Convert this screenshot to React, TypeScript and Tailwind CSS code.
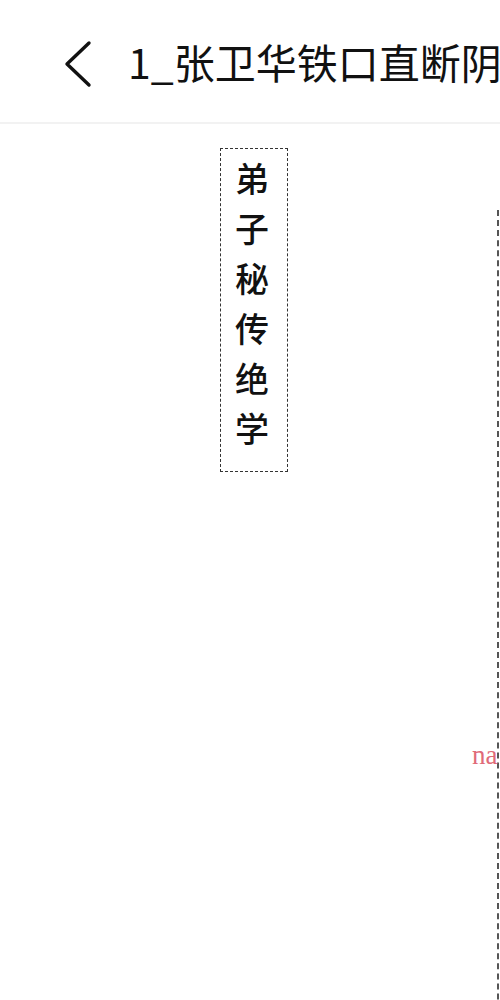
const SPINE = ['弟', '子', '秘', '传', '绝', '学']

export default function App() {
	return (
		<div className="relative h-[1000px] w-[500px] overflow-hidden bg-white [font-family:'Noto_Sans_CJK_SC',sans-serif]">
			{/* Header */}
			<div className="flex h-[124px] items-center border-b-2 border-[#f2f2f2] pl-[62px]">
				<svg width="30" height="48" viewBox="0 0 30 48" fill="none" className="mt-[6px] shrink-0">
					<path d="M27 3 L5 24 L27 45" stroke="#111" strokeWidth="3.4" strokeLinecap="round" strokeLinejoin="round" />
				</svg>
				<div className="ml-[36px] whitespace-nowrap text-[41px] leading-none text-[#111]">
					1_张卫华铁口直断阴阳
				</div>
			</div>

			{/* Scanned page */}
			<div className="relative pt-[24px]">
				<div className="ml-[220px] flex w-[68px] flex-col items-center border border-dashed border-[#333] pb-[18px] pt-[4px]">
					{SPINE.map((c) => (
						<div key={c} className="h-[50px] pr-[4px] text-[34px] font-medium leading-[50px] text-[#111]">
							{c}
						</div>
					))}
				</div>

				<div className="absolute left-[497px] top-[86px] h-[900px] border-l-2 border-dashed border-[#555]" />
				<div className="absolute left-[472px] top-[618px] text-[27px] leading-none text-[#e06a78] [font-family:'Liberation_Serif',serif]">
					na
				</div>
			</div>
		</div>
	)
}
